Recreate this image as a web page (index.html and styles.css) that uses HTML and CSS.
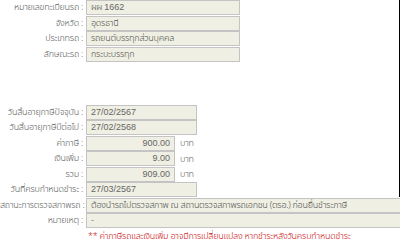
FILE: index.html
```html
<!DOCTYPE html>
<html lang="th">
<head>
<meta charset="utf-8">
<link rel="stylesheet" href="styles.css">
</head>
<body>
<div class="page">
  <div class="framed">
    <div class="form">
      <div class="label">หมายเลขทะเบียนรถ :</div>
      <div class="value"><div class="field w-wide">ผผ <span class="lat">1662</span></div></div>
      <div class="label">จังหวัด :</div>
      <div class="value"><div class="field w-wide">อุดรธานี</div></div>
      <div class="label">ประเภทรถ :</div>
      <div class="value"><div class="field w-wide">รถยนต์บรรทุกส่วนบุคคล</div></div>
      <div class="label">ลักษณะรถ :</div>
      <div class="value"><div class="field w-wide">กระบะบรรทุก</div></div>
    </div>
    <div class="form second">
      <div class="label">วันสิ้นอายุภาษีปัจจุบัน :</div>
      <div class="value"><div class="field w-date lat">27/02/2567</div></div>
      <div class="label">วันสิ้นอายุภาษีปีต่อไป :</div>
      <div class="value"><div class="field w-date lat">27/02/2568</div></div>
      <div class="label">ค่าภาษี :</div>
      <div class="value"><div class="field w-money num lat">900.00</div><span class="unit">บาท</span></div>
      <div class="label">เงินเพิ่ม :</div>
      <div class="value"><div class="field w-money num lat">9.00</div><span class="unit">บาท</span></div>
      <div class="label">รวม :</div>
      <div class="value"><div class="field w-money num lat">909.00</div><span class="unit">บาท</span></div>
      <div class="label">วันที่ครบกำหนดชำระ :</div>
      <div class="value"><div class="field w-date lat">27/03/2567</div></div>
    </div>
  </div>
  <div class="form tail">
    <div class="label">สถานะการตรวจสภาพรถ :</div>
    <div class="value"><div class="field w-full">ต้องนำรถไปตรวจสภาพ ณ สถานตรวจสภาพรถเอกชน (ตรอ.) ก่อนยื่นชำระภาษี</div></div>
    <div class="label">หมายเหตุ :</div>
    <div class="value"><div class="field w-full">-</div></div>
    <div></div>
    <div class="note">** ค่าภาษีรถและเงินเพิ่ม อาจมีการเปลี่ยนแปลง หากชำระหลังวันครบกำหนดชำระ</div>
  </div>
</div>
</body>
</html>
```
FILE: styles.css
```css
html, body {
  margin: 0;
  padding: 0;
  background: #ffffff;
}
body {
  font-family: "Noto Sans Thai", "Noto Sans Thai UI", "Liberation Sans", sans-serif;
  font-size: 9px;
  letter-spacing: -0.25px;
  font-weight: 300;
  color: #5e5e5e;
  overflow: hidden;
  width: 400px;
  height: 250px;
}
.page {
  width: 400px;
}
.framed {
  width: 399px;
  border-right: 1px solid #000000;
}
.form {
  display: grid;
  grid-template-columns: 83px auto;
  column-gap: 3px;
  row-gap: 0.5px;
  align-items: center;
}
.second {
  margin-top: 43px;
}
.tail {
  margin-top: 0.5px;
}
.label {
  text-align: right;
  white-space: nowrap;
  line-height: 15px;
  color: #5e5e5e;
}
.value {
  display: flex;
  align-items: center;
  gap: 5px;
  min-width: 0;
}
.field {
  box-sizing: border-box;
  height: 15px;
  line-height: 13px;
  padding: 0 4px;
  background: #efefe3;
  border: 1px solid #c4c4c4;
  color: #505050;
  white-space: nowrap;
  overflow: hidden;
}
.lat {
  font-family: "Liberation Sans", Arial, sans-serif;
  font-size: 9px;
  letter-spacing: 0;
  font-weight: 400;
  color: #666666;
}
.w-wide { width: 154px; }
.w-date { width: 111px; }
.w-money { width: 89px; }
.w-full { width: 340px; flex-shrink: 0; }
.num { text-align: right; }
.unit { color: #5e5e5e; }
.note {
  color: #cc1111;
  line-height: 15px;
  padding-left: 2px;
  white-space: nowrap;
}
```
